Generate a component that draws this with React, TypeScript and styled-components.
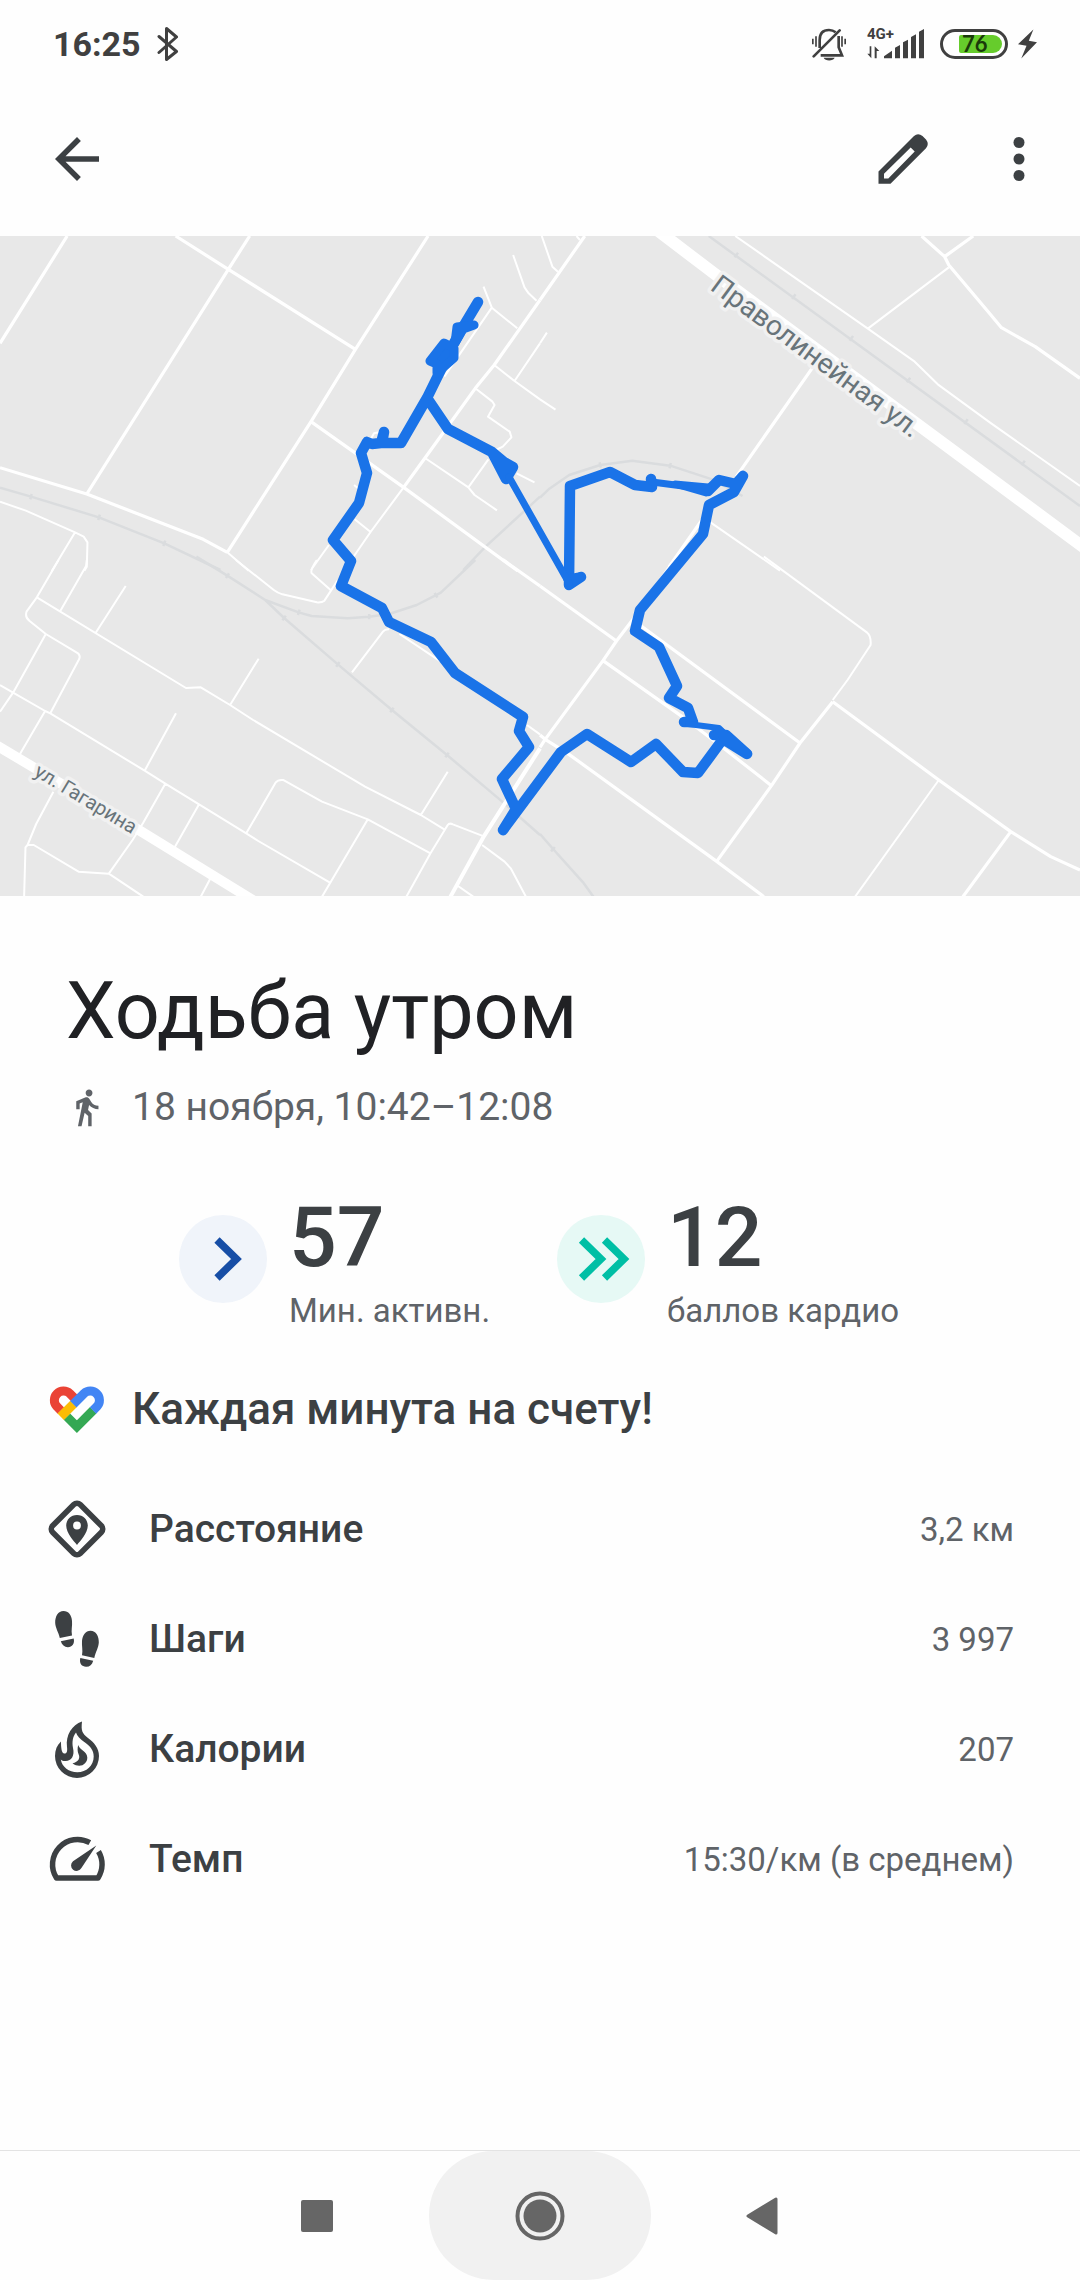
import React from "react";
import styled, { createGlobalStyle } from "styled-components";

const ink = "#3c4043";
const muted = "#5f6368";
const statusInk = "#404040";

const GlobalStyle = createGlobalStyle`
  * { box-sizing: border-box; }
  body {
    margin: 0;
    background: #fefefe;
    color: ${ink};
    font-family: Roboto, "Noto Sans", sans-serif;
  }
  h1, h2, p, dl, dd { margin: 0; }
`;

const Screen = styled.div`
  display: flex;
  flex-direction: column;
  min-height: 100vh;
`;

const StatusBar = styled.header`
  display: flex;
  align-items: center;
  justify-content: space-between;
  height: 88px;
  padding: 0 43px 0 53px;
  color: ${statusInk};
`;

const StatusGroup = styled.div<{ $gap: number }>`
  display: flex;
  align-items: center;
  gap: ${(p) => p.$gap}px;
`;

const Clock = styled.span`
  font-size: 34px;
  font-weight: 700;
  line-height: 40px;
`;

const Signal = styled.div`
  display: grid;
  grid-template-columns: 17px 40px;
  grid-template-rows: 14px 16px;
  width: 57px;
  height: 30px;
  margin-left: 5px;

  svg {
    grid-column: 1 / 3;
    grid-row: 1 / 3;
  }
`;

const NetworkType = styled.span`
  grid-column: 1 / 3;
  grid-row: 1;
  font-size: 15px;
  font-weight: 700;
  line-height: 11px;
`;

const Battery = styled.div`
  display: flex;
  align-items: center;
  justify-content: flex-end;
  width: 68px;
  height: 30px;
  padding-right: 3px;
  border: 3px solid ${statusInk};
  border-radius: 15px;
`;

const BatteryLevel = styled.span`
  width: 43px;
  height: 18px;
  padding-left: 3px;
  border-radius: 2px 9px 9px 2px;
  background: #66cc2c;
  color: #1a3a0a;
  font-family: Lato, Roboto, sans-serif;
  font-size: 22px;
  font-weight: 700;
  line-height: 18px;
`;

const Toolbar = styled.nav`
  display: flex;
  align-items: center;
  height: 148px;
  padding: 0 28px 6px 44px;
`;

const ToolbarActions = styled.div`
  display: flex;
  gap: 50px;
  margin-left: auto;
`;

const IconButton = styled.button`
  display: flex;
  padding: 0;
  border: 0;
  background: none;
  color: ${ink};
  cursor: pointer;
`;

const MapPanel = styled.figure`
  height: 660px;
  margin: 0;
  background: #e8e8e8;

  svg {
    display: block;
    width: 100%;
    height: 100%;
  }
`;

const Content = styled.main`
  flex: 1;
  padding: 69px 66px 0 44px;
`;

const Title = styled.h1`
  padding-left: 22px;
  color: #202124;
  font-size: 79px;
  font-weight: 400;
  line-height: 92px;
`;

const When = styled.p`
  display: flex;
  align-items: center;
  gap: 25px;
  margin-top: 26px;
  padding-left: 22px;
  color: ${muted};
  font-size: 39px;
  line-height: 48px;
`;

const Scores = styled.section`
  display: grid;
  grid-template-columns: repeat(2, 378px);
  margin: 63px 0 0 135px;
`;

const Score = styled.div`
  display: flex;
  align-items: flex-start;
  gap: 22px;
`;

const Badge = styled.span<{ $tint: string }>`
  display: flex;
  width: 88px;
  height: 88px;
  margin-top: 21px;
  border-radius: 50%;
  background: ${(p) => p.$tint};
`;

const ScoreText = styled.div`
  display: flex;
  flex-direction: column;
  gap: 7px;
`;

const ScoreValue = styled.strong`
  font-size: 84px;
  font-weight: 500;
  line-height: 88px;
`;

const ScoreLabel = styled.span`
  color: ${muted};
  font-size: 33px;
  line-height: 44px;
`;

const Tagline = styled.h2`
  display: flex;
  align-items: center;
  gap: 22px;
  margin-top: 43px;
  font-size: 44px;
  font-weight: 500;
  line-height: 66px;
`;

const Metrics = styled.dl`
  margin-top: 32px;
`;

const Metric = styled.div`
  display: flex;
  align-items: center;
  gap: 39px;
  height: 110px;
`;

const MetricName = styled.dt`
  font-size: 39px;
  font-weight: 500;
`;

const MetricValue = styled.dd`
  margin-left: auto;
  color: ${muted};
  font-size: 33px;
`;

const SystemNav = styled.nav`
  display: grid;
  grid-template-columns: 1fr 222px 1fr;
  height: 130px;
  border-top: 1px solid #e3e3e3;
  color: #666;
`;

const NavButton = styled.button<{ $align: string; $pressed?: boolean }>`
  display: flex;
  align-items: center;
  justify-content: ${(p) => p.$align};
  padding: 0 95px;
  border: 0;
  border-radius: 65px;
  background: ${(p) => (p.$pressed ? "#f1f1f1" : "none")};
  color: inherit;

  svg { flex: none; }
`;

const Roads = ({ d, w = 2 }: { d: string; w?: number }) => (
  <path d={d} stroke="#fff" strokeWidth={w} vectorEffect="non-scaling-stroke" />
);
const Rail = ({ d }: { d: string }) => (
  <path d={d} stroke="#dadcde" strokeWidth={2.5} vectorEffect="non-scaling-stroke" />
);
const Tile = ({ x, y, children }: { x: number; y: number; children: React.ReactNode }) => (
  <g transform={`translate(${x} ${y}) scale(0.34439 0.33333)`}>{children}</g>
);

const RouteMap = () => (
  <svg viewBox="0 0 1080 660" preserveAspectRatio="xMidYMid slice" fill="none" strokeLinejoin="round" role="img" aria-label="Маршрут">
    <Tile x={0} y={-6}>
      <Rail d="M0 773L90 800L287 862L477 940L640 1020M1345 1020L1410 950L1568 800M92 792l-4 16M290 854l-5 16M480 932l-6 16" />
      <Roads d="M1172 772L1076 906L1020 990M1490 75L1523 172L1535 190L1558 212M1404 170L1428 233L1502 295M1428 233L1290 440M1435 405L1494 453L1568 508M1494 453L1568 340M1380 475L1430 515L1436 525L1417 560L1480 605L1485 622L1460 650L1440 660M1234 684L1360 772L1378 795L1443 841M1360 772L1418 688M1500 730L1552 757M1028 765L1042 777M1030 868L1076 906M955 945L903 1020M660 967L722 1022M1078 625L1086 610L1100 607M0 815L75 842L218 907L243 920L254 937L252 1010L245 1022M218 907L150 1024" />
      <Roads w={3.2} d="M195 18L0 340M725 18L663 118L252 792M510 18L663 118L1032 358M1243 18L1032 358L903 575L660 967M903 575L1030 668L1172 772L1504 1023M0 713L252 792L590 928L660 967M1568 210L1435 405L1380 475L1234 684L1172 772" />
    </Tile>
    <Tile x={540} y={-6}>
      <Rail d="M490 18L1568 828M0 803L25 778L85 735L175 705L268 692L378 707L500 748L588 798M575 68l-10 14M742 193l-10 14M909 318l-10 14M1075 443l-10 14M1242 568l-10 14M1408 692l-10 14M173 697l4 16M380 699l-4 16" />
      <Roads d="M567 18L952 296L1088 395L1155 463L1310 580L1568 768M952 296L1187 112M5 18L36 110L52 125M106 18L116 30M0 340L20 308M0 508L45 539M495 877L697 1022" />
      <Roads w={3.2} d="M1108 18L1175 80L1187 105L1305 250L1340 293L1438 350L1568 445M1175 80L1258 18M130 18L0 210M800 400L570 740M470 870L375 1010" />
      <Roads w={12} d="M340 0L505 130L1095 582L1580 953" />
    </Tile>
    <Tile x={0} y={324}>
      <Rail d="M570 -10L660 47L770 120L825 174L981 313L1138 450L1298 585L1455 722L1568 825M770 120L867 157L905 168L1010 175L1072 170L1130 162L1210 135L1280 98L1380 0M665 40l-9 14M830 167l-10 14M986 306l-10 14M1143 443l-10 14M1303 578l-10 14M870 149l-5 16M1072 162v16M1262 99l8 14" />
      <Roads d="M170 0L107 112L77 155Q72 172 85 182L133 222L222 277Q235 284 230 297L146 460M252 0L250 18L175 153M107 112L540 384L583 382L668 435L735 480L1060 680L1222 765L1290 808M365 78L278 218M751 296L668 435M133 222L38 398L0 455M0 375L38 398L131 453L146 460L420 632L480 671L578 733L715 820L750 843L957 967M131 453L58 582M511 460L420 632M480 671L415 790L385 840L316 941M578 733L508 860M715 820L800 668Q808 658 822 660L935 725L1068 778L1250 880M1068 778L935 1010M1300 635L1222 765M1180 1010L1250 880L1300 795Q1305 788 1315 793L1405 829M155 695L105 792L80 855M70 1010L74 862L80 855L98 855L228 935L316 941L416 1010M612 953L583 1010M1400 855L1465 905L1483 925L1527 1010M1330 978L1374 1010M1022 337L1112 215Q1118 207 1130 208M1160 222L1280 305M1530 495L1568 523M920 0Q900 30 905 40L960 90M685 0L795 90Q805 98 820 103L920 127Q935 128 942 122L980 62" />
      <Roads w={3.2} d="M1460 -1L1568 78" />
      <Roads w={4} d="M1568 565L1460 740L1405 829L1308 1010" />
      <Roads w={10} d="M-10 556L400 808L740 1024" />
    </Tile>
    <Tile x={540} y={324}>
      <Rail d="M0 822L38 867L125 967L155 1010M43 861l-11 13" />
      <Roads d="M650 -10L950 218Q962 228 960 255L893 360L850 420M1158 660L915 1010" />
      <Roads w={3.2} d="M0 78L222 243M390 0L270 178L222 243L183 302L15 538L0 562M183 302L420 475L540 570L672 677M290 195L755 549M0 525L15 538L80 580L513 904L650 1010M850 425L755 549L672 677L513 904M850 425L1158 660L1367 815L1483 890L1568 930M1367 815L1228 1010" />
    </Tile>
    <g stroke="#1a73e8" strokeLinecap="round">
      <path strokeWidth={10.500} d="M478 66L463 91L454 107L427 162L401 207H382L384 196L381 207L372 208L367 206L361 217L367 237L359 267L333 304L351 325L341 350L382 372L389 386L431 406L455 437L523 481L519 495L529 511L502 543L516 573L503 594L561 516L587 498L631 526L656 508L683 536L698 537L723 503L747 518L726 499L714 499M684 486L693 486L688 472L669 462L677 450L659 411L635 395L640 374L703 298L709 269L734 256L743 240L736 248L719 244L708 255M651 243L652 251L635 249L610 236L570 250L569 349L581 341M506 243L513 231L504 226L492 216L448 193L427 162M506 243L492 216" />
      <path strokeWidth={9} fill="#1a73e8" d="M457 91L474 89L463 93L455 107ZM430 125L444 107L454 112V122L437 137V128ZM568 343L579 341L570 348Z" />
      <path strokeWidth={7} d="M509 241L569 347M652 246L706 253" />
      <path strokeWidth={6} d="M688 488L719 492L742 514" />
      <path strokeWidth={7} fill="#1a73e8" d="M719 494L748 517L724 504ZM675 248L708 251L706 257Z" />
    </g>
    <g fill="#68747a" stroke="#f1f1f1" strokeWidth={7} paintOrder="stroke" fontFamily="Roboto, sans-serif">
      <text transform="translate(709 53) rotate(36.4)" fontSize={28}>Праволинейная ул.</text>
      <text transform="translate(33 539) rotate(31)" fontSize={20}>ул. Гагарина</text>
    </g>
  </svg>
);

const DistanceIcon = () => (
  <svg width="66" height="66" viewBox="0 0 66 66" fill="none" aria-hidden="true">
    <rect x="13.5" y="13.5" width="39" height="39" rx="4.5" transform="rotate(45 33 33)" stroke={ink} strokeWidth="5.6" />
    <path fill={ink} fillRule="evenodd" d="M33 19C26.8 19 22.2 23.6 22.2 29.6C22.2 37 30 45.500 33 49C36 45.500 43.800 37 43.800 29.600C43.800 23.600 39.200 19 33 19ZM33 25.600A3.900 3.900 0 1 1 33 33.400A3.900 3.900 0 1 1 33 25.600Z" />
  </svg>
);

const StepsIcon = () => (
  <svg width="66" height="66" viewBox="0 0 66 66" fill={ink} aria-hidden="true">
    <path d="M19.500 5C14 5 11 10.500 11.200 17C11.400 22 14.500 26 15.800 32L28 29.500C27 24 28.500 20 28 15C27.600 9 24.500 5 19.500 5ZM16.800 35.300L29.700 32.600C31 38 28 41 24 41.200C20.500 41.300 18 39 16.800 35.300Z" />
    <path d="M46.500 24.700C52 24.700 55 30 54.800 36.500C54.600 41.500 51.500 46 50.300 52L38 49.300C39 44 37.600 40 38 35C38.500 29 41.500 24.700 46.500 24.700ZM36.300 52L49.200 54.800C48 59 45.500 61 42 60.800C38 60.600 35 57.500 36.300 52Z" />
  </svg>
);

const FlameIcon = () => (
  <svg width="66" height="66" viewBox="0 0 66 66" fill={ink} aria-hidden="true">
    <path fillRule="evenodd" d="M38 5.500C37 15 38 17 44 22C50 26.500 55 32 55 40A22 22 0 0 1 11 40C11 34 13 29 17 25.500C17 31 17.500 37 20 37.500C23 38 23.500 35 23 31C21.500 19 28 9 38 5.500ZM32 16.500C28.500 21 28 26 29 32C31 40 27 45.500 21 45C19 45 18 44.500 16.800 43.500C18 51 25 56.300 33.300 56.300C42.500 56.300 49.700 49.500 49.700 40.500C49.700 34.500 46.500 30.500 41 26.500C36 23 33 20 32 16.500Z" />
    <path d="M34.300 29C35.500 34 43 35 43.300 41.500C43.500 48 36 53 28.500 47.300C34.500 46 36.500 42 34.500 38C33.500 35.500 33.200 32 34.300 29Z" />
  </svg>
);

const PaceIcon = () => (
  <svg width="66" height="66" viewBox="0 0 66 66" fill="none" aria-hidden="true">
    <path d="M45.800 16.700A25 25 0 0 0 12.500 52H54A25 25 0 0 0 54.500 25.500" stroke={ink} strokeWidth="5.500" strokeLinejoin="round" />
    <path fill={ink} d="M52.300 19.500L29 35.200A5.500 5.500 0 1 0 37.400 42Z" />
  </svg>
);

const HeartLogo = () => (
  <svg width="66" height="66" viewBox="0 0 66 66" fill="none" strokeWidth="9" aria-hidden="true">
    <path stroke="#ea4335" d="M16.900 34.600L12.800 30.500A9.200 9.200 0 0 1 25.800 17.500L31 22.700" />
    <path stroke="#34a853" d="M22.900 40.600L32.900 50.600L49.200 34.300" />
    <path stroke="#fbbc04" d="M16.700 40.800L29.500 28" />
    <path stroke="#4285f4" d="M29.300 28.200L40 17.500A9.200 9.200 0 0 1 53 30.500L49 34.500" />
  </svg>
);

const metrics = [
  { name: "Расстояние", value: "3,2 км", Icon: DistanceIcon },
  { name: "Шаги", value: "3 997", Icon: StepsIcon },
  { name: "Калории", value: "207", Icon: FlameIcon },
  { name: "Темп", value: "15:30/км (в среднем)", Icon: PaceIcon },
];

export default function App() {
  return (
    <Screen>
      <GlobalStyle />
      <StatusBar>
        <StatusGroup $gap={16}>
          <Clock>16:25</Clock>
          <svg width="22" height="34" viewBox="0 0 22 34" fill="none" stroke={statusInk} strokeWidth="3" strokeLinecap="round" strokeLinejoin="round" aria-hidden="true">
            <path d="M2 9.500L19.500 24.500L9.500 32.500V1.500L19.500 10L2 25.500" />
          </svg>
        </StatusGroup>
        <StatusGroup $gap={16}>
          <svg width="34" height="33" viewBox="96 82 102 99" fill="none" stroke={statusInk} strokeWidth="8" aria-hidden="true">
            <path d="M119 142V118C119 98 130 88 147 88C156 88 162 91 167 95M176 106V140L186 164H122" />
            <path d="M101 167L179 89" strokeLinecap="round" />
            <path strokeWidth="5" d="M98.500 114V131M108 107V138M186 107V138M195.500 114V131" />
            <path fill={statusInk} stroke="none" d="M131 171H164C160 182 135 182 131 171Z" />
          </svg>
          <Signal>
            <NetworkType>4G+</NetworkType>
            <svg width="57" height="30" viewBox="261 86 171 90" fill={statusInk} aria-hidden="true">
              <path d="M312 174V168L336 151V174ZM345 174V142L360 134V174ZM369 174V126L384 118V174ZM393 174V110L408 102V174ZM417 174V94L432 86V174Z" />
              <path d="M269 138H274V174L262 160H269ZM284 174V138L298 152H290V174Z" />
            </svg>
          </Signal>
          <StatusGroup $gap={10}>
            <Battery><BatteryLevel>76</BatteryLevel></Battery>
            <svg width="19" height="30" viewBox="714 87 58 90" fill={statusInk} aria-hidden="true">
              <path d="M761 88L714 133L740 137L724 176L772 127L747 122Z" />
            </svg>
          </StatusGroup>
        </StatusGroup>
      </StatusBar>

      <Toolbar>
        <IconButton aria-label="Назад">
          <svg width="66" height="66" viewBox="0 0 24 24" fill="currentColor">
            <path d="M20 11H7.830l5.590-5.590L12 4l-8 8 8 8 1.410-1.410L7.830 13H20v-2z" />
          </svg>
        </IconButton>
        <ToolbarActions>
          <IconButton aria-label="Изменить">
            <svg width="66" height="66" viewBox="0 0 66 66" fill="currentColor" fillRule="evenodd">
              <path d="M8.500 45.500V57.800H20.500L56 22.300Q59.500 18 56 13.500L52.500 10Q48 6.500 44 10ZM14 47.700L40.700 21.500L44.700 25.500L18.300 52.500H14Z" />
            </svg>
          </IconButton>
          <IconButton aria-label="Ещё">
            <svg width="66" height="66" viewBox="0 0 24 24" fill="currentColor">
              <circle cx="12" cy="6" r="2" /><circle cx="12" cy="12" r="2" /><circle cx="12" cy="18" r="2" />
            </svg>
          </IconButton>
        </ToolbarActions>
      </Toolbar>

      <MapPanel><RouteMap /></MapPanel>

      <Content>
        <Title>Ходьба утром</Title>
        <When>
          <svg width="41" height="41" viewBox="0 0 24 24" fill="currentColor" aria-hidden="true">
            <path d="M13.500 5.500c1.100 0 2-.9 2-2s-.9-2-2-2-2 .9-2 2 .9 2 2 2zM9.800 8.900L7 23h2.100l1.800-8 2.100 2v6h2v-7.500l-2.100-2 .6-3C14.800 12 16.800 13 19 13v-2c-1.900 0-3.500-1-4.300-2.400l-1-1.600c-.4-.6-1-1-1.700-1-.3 0-.5.1-.8.1L6 8.300V13h2V9.600l1.800-.7" />
          </svg>
          18 ноября, 10:42–12:08
        </When>

        <Scores>
          <Score>
            <Badge $tint="#f0f4fa">
              <svg viewBox="0 0 88 88" fill="none" stroke="#174ea6" strokeWidth="7.500" aria-hidden="true">
                <path d="M38 25L57.500 44L38 63" />
              </svg>
            </Badge>
            <ScoreText>
              <ScoreValue>57</ScoreValue>
              <ScoreLabel>Мин. активн.</ScoreLabel>
            </ScoreText>
          </Score>
          <Score>
            <Badge $tint="#e6f9f5">
              <svg viewBox="0 0 88 88" fill="none" stroke="#00bfa5" strokeWidth="7.500" aria-hidden="true">
                <path d="M24.500 25L44 44L24.500 63M47.500 25L67 44L47.500 63" />
              </svg>
            </Badge>
            <ScoreText>
              <ScoreValue>12</ScoreValue>
              <ScoreLabel>баллов кардио</ScoreLabel>
            </ScoreText>
          </Score>
        </Scores>

        <Tagline><HeartLogo />Каждая минута на счету!</Tagline>

        <Metrics>
          {metrics.map(({ name, value, Icon }) => (
            <Metric key={name}>
              <Icon />
              <MetricName>{name}</MetricName>
              <MetricValue>{value}</MetricValue>
            </Metric>
          ))}
        </Metrics>
      </Content>

      <SystemNav>
        <NavButton $align="flex-end" aria-label="Недавние приложения">
          <svg width="34" height="34" viewBox="0 0 34 34" fill="currentColor"><rect x="1" y="1" width="32" height="32" rx="2" /></svg>
        </NavButton>
        <NavButton $align="center" $pressed aria-label="Домой">
          <svg width="50" height="50" viewBox="0 0 50 50" fill="currentColor">
            <circle cx="25" cy="25" r="22.500" fill="none" stroke="currentColor" strokeWidth="4" /><circle cx="25" cy="25" r="16.500" />
          </svg>
        </NavButton>
        <NavButton $align="flex-start" aria-label="Назад">
          <svg width="32" height="38" viewBox="0 0 32 38" fill="currentColor" stroke="currentColor" strokeWidth="3" strokeLinejoin="round"><path d="M2 19L30 2V36Z" /></svg>
        </NavButton>
      </SystemNav>
    </Screen>
  );
}
